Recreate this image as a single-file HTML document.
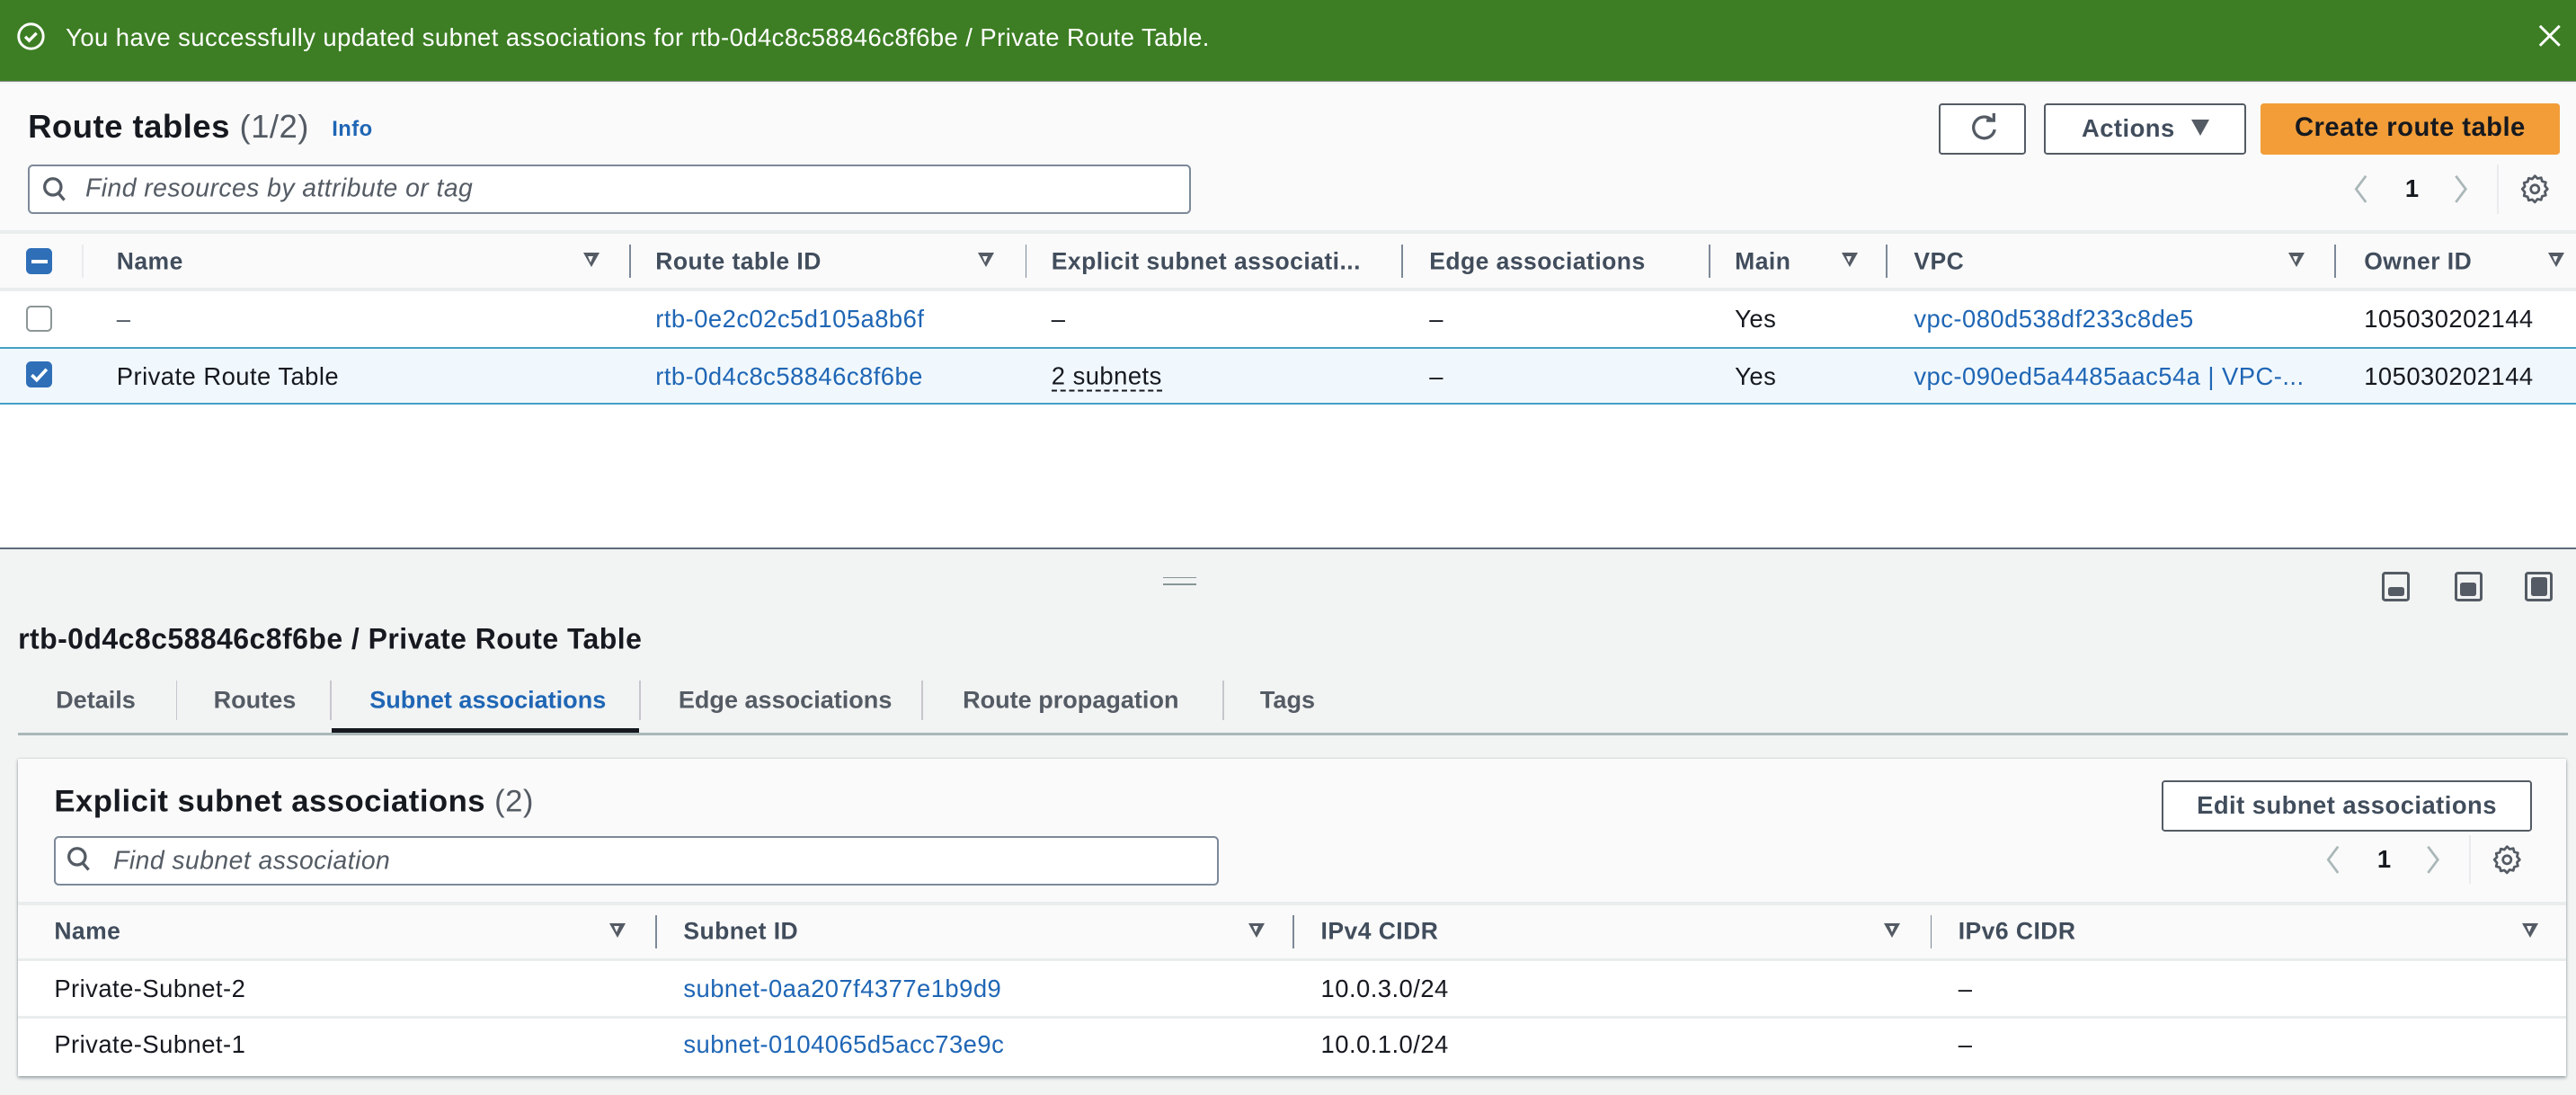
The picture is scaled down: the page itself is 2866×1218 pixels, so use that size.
<!DOCTYPE html>
<html><head><meta charset="utf-8">
<style>
*{box-sizing:border-box;margin:0;padding:0}
html,body{width:2866px;height:1218px;overflow:hidden;background:#f2f3f3}
#w{zoom:1.82781;width:1568px;height:666px;position:relative;font-family:"Liberation Sans",Arial,sans-serif;font-size:15px;letter-spacing:.25px;color:#16191f;background:#f2f3f3}
.a{position:absolute;white-space:nowrap}
.vc{transform:translateY(-50%)}
.lk{color:#1f66b5}
.b{font-weight:bold}
.hd{color:#414d5c;font-weight:bold;font-size:14.5px}
.tb{font-size:14.8px;letter-spacing:0}
.dv{position:absolute;width:1px;background:#c6c6cd}
.arr{position:absolute;width:0;height:0;border-left:5px solid transparent;border-right:5px solid transparent;border-top:9px solid #545b64}
.arr:after{content:"";position:absolute;left:-2px;top:-7px;border-left:2px solid transparent;border-right:2px solid transparent;border-top:4px solid #fafafa}
.box{position:absolute;background:#fff;border:1px solid #7d8998;border-radius:3px}
.btn{position:absolute;border:1.5px solid #545b64;border-radius:2px;background:#fff;font-weight:bold;color:#414d5c;text-align:center;font-size:15px}
</style></head><body><div id="w">
<div class="a" style="left:0;top:0;width:1568px;height:50px;background:#3d7e24;border-bottom:1px solid #8a8f8a"></div>
<svg class="a" style="left:10px;top:13px" width="18" height="18" viewBox="0 0 18 18"><circle cx="9" cy="9" r="7.5" fill="none" stroke="#fff" stroke-width="1.6"/><path d="M5.5 9.2l2.4 2.4 4.5-4.6" fill="none" stroke="#fff" stroke-width="1.8"/></svg>
<div class="a vc" style="left:40px;top:23px;color:#fff;font-size:15px">You have successfully updated subnet associations for rtb-0d4c8c58846c8f6be / Private Route Table.</div>
<svg class="a" style="left:1545px;top:15px" width="14" height="14"><path d="M1 1l12 12M13 1L1 13" stroke="#fff" stroke-width="1.6"/></svg>
<div class="a" style="left:0;top:51px;width:1568px;height:282px;background:#fff"></div>
<div class="a" style="left:0;top:51px;width:1568px;height:124px;background:#fafafa"></div>
<div class="a" style="left:0;top:140px;width:1568px;height:2px;background:#eaeded"></div>
<div class="a vc b" style="left:17px;top:77px;font-size:20px">Route tables <span style="font-weight:normal;color:#545b64">(1/2)</span></div>
<div class="a vc b lk" style="left:202px;top:79px;font-size:13px">Info</div>
<div class="box" style="left:17px;top:100px;width:708px;height:30px;border-width:1.5px"></div>
<svg class="a" style="left:25px;top:107px" width="16" height="16"><circle cx="7" cy="6.5" r="5" fill="none" stroke="#545b64" stroke-width="1.8"/><path d="M10.5 10.5l3.5 4" stroke="#545b64" stroke-width="1.8"/></svg>
<div class="a vc" style="left:52px;top:115px;font-style:italic;color:#545b64;font-size:15.5px">Find resources by attribute or tag</div>
<div class="btn" style="left:1180px;top:63px;width:53px;height:31px"></div>
<svg class="a" style="left:1198px;top:68px" width="20" height="20" viewBox="0 0 20 20"><path d="M14.5 5.5A6.5 6.5 0 1 0 16 11" fill="none" stroke="#545b64" stroke-width="1.8"/><path d="M11 5.5h4.5V1" fill="none" stroke="#545b64" stroke-width="1.8"/></svg>
<div class="btn" style="left:1244px;top:63px;width:123px;height:31px;line-height:28px;text-align:left;padding-left:22px">Actions</div>
<div class="a" style="left:1334px;top:73px;border-left:6px solid transparent;border-right:6px solid transparent;border-top:10px solid #545b64"></div>
<div class="a" style="left:1376px;top:63px;width:182px;height:31px;background:#f29d38;border-radius:2px;text-align:center;line-height:30px;font-weight:bold;color:#16191f;font-size:16px">Create route table</div>
<svg class="a" style="left:1430px;top:105px" width="14" height="20"><path d="M10 2L4 10l6 8" fill="none" stroke="#aab7b8" stroke-width="1.5"/></svg>
<div class="a vc b" style="left:1464px;top:115px">1</div>
<svg class="a" style="left:1491px;top:105px" width="14" height="20"><path d="M4 2l6 8-6 8" fill="none" stroke="#aab7b8" stroke-width="1.5"/></svg>
<div class="dv" style="left:1520px;top:100px;height:30px;background:#e9ebed"></div>
<svg class="a" style="left:1533px;top:105px" width="20" height="20" viewBox="0 0 20 20"><path d="M10 2l1.6 1.6 2.2-.5.6 2.2 2.2.6-.5 2.2L17.7 10l-1.6 1.6.5 2.2-2.2.6-.6 2.2-2.2-.5L10 18l-1.6-1.6-2.2.5-.6-2.2-2.2-.6.5-2.2L2.3 10l1.6-1.6-.5-2.2 2.2-.6.6-2.2 2.2.5z" fill="none" stroke="#545b64" stroke-width="1.5" stroke-linejoin="round"/><circle cx="10" cy="10" r="2.5" fill="none" stroke="#545b64" stroke-width="1.5"/></svg>
<div class="a" style="left:0;top:175px;width:1568px;height:2px;background:#eaeded"></div>
<div class="a" style="left:16px;top:151px;width:16px;height:16px;background:#2f6fb8;border-radius:3px"></div>
<div class="a" style="left:19px;top:158px;width:10px;height:2.5px;background:#fff"></div>
<div class="dv" style="left:50px;top:149px;height:20px;background:#e9ebed"></div>
<div class="a vc hd" style="left:71px;top:159px">Name</div><div class="arr" style="left:355px;top:154px"></div>
<div class="dv" style="left:383px;top:149px;height:20px;background:#7d8998"></div>
<div class="a vc hd" style="left:399px;top:159px">Route table ID</div><div class="arr" style="left:595px;top:154px"></div>
<div class="dv" style="left:624px;top:149px;height:20px;background:#7d8998"></div>
<div class="a vc hd" style="left:640px;top:159px">Explicit subnet associati...</div>
<div class="dv" style="left:853px;top:149px;height:20px;background:#7d8998"></div>
<div class="a vc hd" style="left:870px;top:159px">Edge associations</div>
<div class="dv" style="left:1040px;top:149px;height:20px;background:#7d8998"></div>
<div class="a vc hd" style="left:1056px;top:159px">Main</div><div class="arr" style="left:1121px;top:154px"></div>
<div class="dv" style="left:1148px;top:149px;height:20px;background:#7d8998"></div>
<div class="a vc hd" style="left:1165px;top:159px">VPC</div><div class="arr" style="left:1393px;top:154px"></div>
<div class="dv" style="left:1421px;top:149px;height:20px;background:#7d8998"></div>
<div class="a vc hd" style="left:1439px;top:159px">Owner ID</div><div class="arr" style="left:1551px;top:154px"></div>
<div class="a" style="left:16px;top:186px;width:16px;height:16px;border:1.5px solid #8d9696;border-radius:3px;background:#fff"></div>
<div class="a vc" style="left:71px;top:194px;color:#545b64">–</div>
<div class="a vc lk" style="left:399px;top:194px">rtb-0e2c02c5d105a8b6f</div>
<div class="a vc" style="left:640px;top:194px">–</div>
<div class="a vc" style="left:870px;top:194px">–</div>
<div class="a vc" style="left:1056px;top:194px">Yes</div>
<div class="a vc lk" style="left:1165px;top:194px">vpc-080d538df233c8de5</div>
<div class="a vc" style="left:1439px;top:194px">105030202144</div>
<div class="a" style="left:0;top:211px;width:1568px;height:35px;background:#f1f8fd;border-top:1.5px solid #44a0c8;border-bottom:1.5px solid #44a0c8"></div>
<div class="a" style="left:16px;top:220px;width:16px;height:16px;background:#2f6fb8;border-radius:3px"></div>
<svg class="a" style="left:16px;top:220px" width="16" height="16"><path d="M3.5 8.3l3 3 6-6.5" fill="none" stroke="#fff" stroke-width="2"/></svg>
<div class="a vc" style="left:71px;top:229px">Private Route Table</div>
<div class="a vc lk" style="left:399px;top:229px">rtb-0d4c8c58846c8f6be</div>
<div class="a vc" style="left:640px;top:229px;border-bottom:1.5px dashed #16191f;line-height:17px">2 subnets</div>
<div class="a vc" style="left:870px;top:229px">–</div>
<div class="a vc" style="left:1056px;top:229px">Yes</div>
<div class="a vc lk" style="left:1165px;top:229px">vpc-090ed5a4485aac54a | VPC-...</div>
<div class="a vc" style="left:1439px;top:229px">105030202144</div>
<div class="a" style="left:0;top:333px;width:1568px;height:1.5px;background:#5f6b7a"></div>
<div class="a" style="left:708px;top:351px;width:20px;height:1px;background:#879596"></div>
<div class="a" style="left:708px;top:355px;width:20px;height:1px;background:#879596"></div>
<div class="a" style="left:1450px;top:348px;width:17px;height:18px;border:2px solid #545b64;border-radius:2px"></div><div class="a" style="left:1453.5px;top:357px;width:10px;height:5.5px;background:#545b64;border-radius:1.5px"></div>
<div class="a" style="left:1494px;top:348px;width:17px;height:18px;border:2px solid #545b64;border-radius:2px"></div><div class="a" style="left:1497.5px;top:354.5px;width:10px;height:8px;background:#545b64;border-radius:1.5px"></div>
<div class="a" style="left:1537px;top:348px;width:17px;height:18px;border:2px solid #545b64;border-radius:2px"></div><div class="a" style="left:1540.5px;top:351.5px;width:10px;height:11px;background:#545b64;border-radius:1.5px"></div>
<div class="a vc b" style="left:11px;top:389px;font-size:17.5px">rtb-0d4c8c58846c8f6be / Private Route Table</div>
<div class="a" style="left:11px;top:446px;width:1552px;height:1.5px;background:#aab7b8"></div>
<div class="a vc tb" style="left:34px;top:426px;font-weight:bold;color:#545b64">Details</div>
<div class="dv" style="left:107px;top:414px;height:24px;background:#c6c6cd"></div>
<div class="a vc tb" style="left:130px;top:426px;font-weight:bold;color:#545b64">Routes</div>
<div class="dv" style="left:201px;top:414px;height:24px;background:#c6c6cd"></div>
<div class="a vc b lk tb" style="left:225px;top:426px">Subnet associations</div>
<div class="a" style="left:202px;top:443px;width:187px;height:3px;background:#16191f"></div>
<div class="dv" style="left:389px;top:414px;height:24px;background:#c6c6cd"></div>
<div class="a vc tb" style="left:413px;top:426px;font-weight:bold;color:#545b64">Edge associations</div>
<div class="dv" style="left:561px;top:414px;height:24px;background:#c6c6cd"></div>
<div class="a vc tb" style="left:586px;top:426px;font-weight:bold;color:#545b64">Route propagation</div>
<div class="dv" style="left:744px;top:414px;height:24px;background:#c6c6cd"></div>
<div class="a vc tb" style="left:767px;top:426px;font-weight:bold;color:#545b64">Tags</div>
<div class="a" style="left:11px;top:462px;width:1551px;height:193px;background:#fff;box-shadow:0 1px 2px rgba(0,28,36,.35),0 0 1px rgba(0,28,36,.2)"></div>
<div class="a" style="left:11px;top:462px;width:1551px;height:121px;background:#fafafa"></div>
<div class="a" style="left:11px;top:549px;width:1551px;height:2px;background:#eaeded"></div>
<div class="a vc b" style="left:33px;top:488px;font-size:19px">Explicit subnet associations <span style="font-weight:normal;color:#545b64">(2)</span></div>
<div class="btn" style="left:1316px;top:475px;width:225px;height:31px;line-height:28px">Edit subnet associations</div>
<div class="box" style="left:33px;top:509px;width:709px;height:30px;border-width:1.5px"></div>
<svg class="a" style="left:40px;top:515px" width="16" height="16"><circle cx="7" cy="6.5" r="5" fill="none" stroke="#545b64" stroke-width="1.8"/><path d="M10.5 10.5l3.5 4" stroke="#545b64" stroke-width="1.8"/></svg>
<div class="a vc" style="left:69px;top:524px;font-style:italic;color:#545b64;font-size:15.5px">Find subnet association</div>
<svg class="a" style="left:1413px;top:513px" width="14" height="20"><path d="M10 2L4 10l6 8" fill="none" stroke="#aab7b8" stroke-width="1.5"/></svg>
<div class="a vc b" style="left:1447px;top:523px">1</div>
<svg class="a" style="left:1474px;top:513px" width="14" height="20"><path d="M4 2l6 8-6 8" fill="none" stroke="#aab7b8" stroke-width="1.5"/></svg>
<div class="dv" style="left:1503px;top:508px;height:30px;background:#e9ebed"></div>
<svg class="a" style="left:1516px;top:513px" width="20" height="20" viewBox="0 0 20 20"><path d="M10 2l1.6 1.6 2.2-.5.6 2.2 2.2.6-.5 2.2L17.7 10l-1.6 1.6.5 2.2-2.2.6-.6 2.2-2.2-.5L10 18l-1.6-1.6-2.2.5-.6-2.2-2.2-.6.5-2.2L2.3 10l1.6-1.6-.5-2.2 2.2-.6.6-2.2 2.2.5z" fill="none" stroke="#545b64" stroke-width="1.5" stroke-linejoin="round"/><circle cx="10" cy="10" r="2.5" fill="none" stroke="#545b64" stroke-width="1.5"/></svg>
<div class="a" style="left:11px;top:583px;width:1551px;height:2px;background:#eaeded"></div>
<div class="a vc hd" style="left:33px;top:567px">Name</div><div class="arr" style="left:371px;top:562px"></div>
<div class="dv" style="left:399px;top:557px;height:20px;background:#7d8998"></div>
<div class="a vc hd" style="left:416px;top:567px">Subnet ID</div><div class="arr" style="left:760px;top:562px"></div>
<div class="dv" style="left:787px;top:557px;height:20px;background:#7d8998"></div>
<div class="a vc hd" style="left:804px;top:567px">IPv4 CIDR</div><div class="arr" style="left:1147px;top:562px"></div>
<div class="dv" style="left:1175px;top:557px;height:20px;background:#7d8998"></div>
<div class="a vc hd" style="left:1192px;top:567px">IPv6 CIDR</div><div class="arr" style="left:1535px;top:562px"></div>
<div class="a vc" style="left:33px;top:602px">Private-Subnet-2</div>
<div class="a vc lk" style="left:416px;top:602px">subnet-0aa207f4377e1b9d9</div>
<div class="a vc" style="left:804px;top:602px">10.0.3.0/24</div>
<div class="a vc" style="left:1192px;top:602px">–</div>
<div class="a" style="left:11px;top:618px;width:1551px;height:2px;background:#eaeded"></div>
<div class="a vc" style="left:33px;top:636px">Private-Subnet-1</div>
<div class="a vc lk" style="left:416px;top:636px">subnet-0104065d5acc73e9c</div>
<div class="a vc" style="left:804px;top:636px">10.0.1.0/24</div>
<div class="a vc" style="left:1192px;top:636px">–</div>
</div></body></html>
